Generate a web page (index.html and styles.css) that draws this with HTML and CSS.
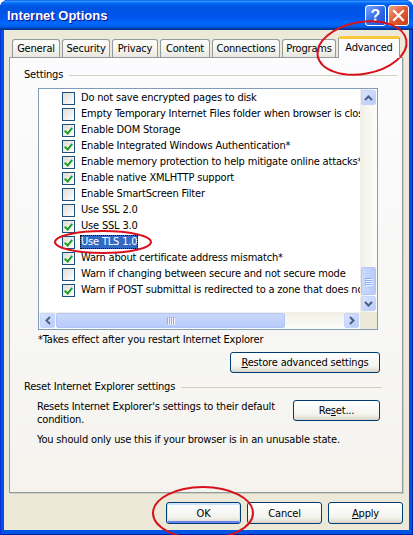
FILE: index.html
```html
<!DOCTYPE html>
<html lang="en">
<head>
  <meta charset="UTF-8" />
  <meta name="viewport" content="width=device-width, initial-scale=1.0" />
  <title>Internet Options</title>
  <link rel="stylesheet" href="styles.css">
</head>
<body>
  <div class="window">
    <div class="titlebar">
      <span class="title">Internet Options</span>
      <div class="title-buttons">
        <span class="tb help">?</span>
        <span class="tb close">
          <svg width="13" height="13" viewBox="0 0 13 13"><path d="M2 2 L11 11 M11 2 L2 11" stroke="#fff" stroke-width="2.2" stroke-linecap="square"/></svg>
        </span>
      </div>
    </div>

    <div class="client">
      <ul class="tabs">
        <li class="t-general">General</li>
        <li class="t-security">Security</li>
        <li class="t-privacy">Privacy</li>
        <li class="t-content">Content</li>
        <li class="t-connections">Connections</li>
        <li class="t-programs">Programs</li>
        <li class="t-advanced active">Advanced</li>
      </ul>

      <div class="panel">
        <div class="group-label"><span>Settings</span><i></i></div>

        <div class="listbox">
          <ul class="rows">
            <li><span class="chk"></span><span class="lbl">Do not save encrypted pages to disk</span></li>
            <li><span class="chk"></span><span class="lbl">Empty Temporary Internet Files folder when browser is closed</span></li>
            <li><span class="chk on"></span><span class="lbl">Enable DOM Storage</span></li>
            <li><span class="chk on"></span><span class="lbl">Enable Integrated Windows Authentication*</span></li>
            <li><span class="chk on"></span><span class="lbl">Enable memory protection to help mitigate online attacks*</span></li>
            <li><span class="chk on"></span><span class="lbl">Enable native XMLHTTP support</span></li>
            <li><span class="chk"></span><span class="lbl">Enable SmartScreen Filter</span></li>
            <li><span class="chk"></span><span class="lbl">Use SSL 2.0</span></li>
            <li><span class="chk on"></span><span class="lbl">Use SSL 3.0</span></li>
            <li class="selected"><span class="chk on"></span><span class="lbl">Use TLS 1.0</span></li>
            <li><span class="chk on"></span><span class="lbl">Warn about certificate address mismatch*</span></li>
            <li><span class="chk"></span><span class="lbl">Warn if changing between secure and not secure mode</span></li>
            <li><span class="chk on"></span><span class="lbl">Warn if POST submittal is redirected to a zone that does not permit posts</span></li>
          </ul>
          <div class="vscroll">
            <span class="sb-btn"><svg width="9" height="6" viewBox="0 0 9 6"><polyline points="1,5 4.5,1.5 8,5" fill="none" stroke="#4d6185" stroke-width="2"/></svg></span>
            <span class="sb-track v"><span class="thumb v"><i></i><i></i><i></i><i></i></span></span>
            <span class="sb-btn"><svg width="9" height="6" viewBox="0 0 9 6"><polyline points="1,1 4.5,4.5 8,1" fill="none" stroke="#4d6185" stroke-width="2"/></svg></span>
          </div>
          <div class="hscroll">
            <span class="sb-btn"><svg width="6" height="9" viewBox="0 0 6 9"><polyline points="5,1 1.5,4.5 5,8" fill="none" stroke="#4d6185" stroke-width="2"/></svg></span>
            <span class="sb-track h"><span class="thumb h"><i></i><i></i><i></i><i></i></span></span>
            <span class="sb-btn"><svg width="6" height="9" viewBox="0 0 6 9"><polyline points="1,1 4.5,4.5 1,8" fill="none" stroke="#4d6185" stroke-width="2"/></svg></span>
          </div>
          <div class="corner"></div>
        </div>

        <p class="note">*Takes effect after you restart Internet Explorer</p>
        <button class="btn restore"><u>R</u>estore advanced settings</button>

        <div class="group-label reset-label"><span>Reset Internet Explorer settings</span><i></i></div>
        <div class="reset-row">
          <p>Resets Internet Explorer's settings to their default<br>condition.</p>
          <button class="btn reset">Re<u>s</u>et...</button>
        </div>
        <p class="warn">You should only use this if your browser is in an unusable state.</p>
      </div>

      <div class="dialog-buttons">
        <button class="btn default">OK</button>
        <button class="btn">Cancel</button>
        <button class="btn"><u>A</u>pply</button>
      </div>
    </div>

    <!-- red marks drawn over the screenshot -->
    <svg class="marks" width="413" height="535" viewBox="0 0 413 535">
      <ellipse cx="362" cy="48" rx="45" ry="26" transform="rotate(-10 362 48)"/>
      <ellipse cx="103" cy="242" rx="48" ry="11"/>
      <ellipse cx="203" cy="513" rx="50" ry="26"/>
    </svg>
  </div>
</body>
</html>
```

FILE: styles.css
```css
body {
  margin: 0;
  background-color: #fff;
}
.window {
  position: relative;
  width: 413px;
  height: 535px;
  box-sizing: border-box;
  padding: 0 4px 5px 4px;
  background-color: #0054e3;
  border-radius: 8px 8px 0 0;
  box-shadow: inset 1px 0 0 #0831d9, inset -1px 0 0 #001ea0, inset 0 -1px 0 #001ea0;
  overflow: hidden;
}
.titlebar {
  height: 30px;
  margin: 0 -4px;
  padding: 0 4px 0 7px;
  display: flex;
  align-items: center;
  justify-content: space-between;
  border-radius: 8px 8px 0 0;
  background: linear-gradient(to bottom, #0058ee 0%, #3a93ff 4%, #288eff 6%, #127dff 8%, #036ffc 10%, #0262ee 14%, #0057e5 20%, #0054e3 24%, #0055eb 56%, #005bf5 66%, #026afe 76%, #0062ef 86%, #0052d6 92%, #0040ab 94%, #003092 100%);
}
.title {
  font-family: "Liberation Sans", Arial, sans-serif;
  font-weight: bold;
  font-size: 13px;
  color: #fff;
  text-shadow: 1px 1px #0f1089;
  margin-top: 1px;
}
.title-buttons {
  display: flex;
  gap: 2px;
  margin-top: 1px;
}
.tb {
  width: 21px;
  height: 21px;
  box-sizing: border-box;
  border: 1px solid #fff;
  border-radius: 3px;
  display: flex;
  align-items: center;
  justify-content: center;
}
.help {
  background: linear-gradient(135deg, #7aa6fb, #2f68e6 55%, #1d4ed2);
  color: #fff;
  font-family: "Liberation Sans", Arial, sans-serif;
  font-weight: bold;
  font-size: 16px;
}
.close {
  background: linear-gradient(135deg, #f0a58c, #e15a32 50%, #c73e15);
}

/* client area */
.client {
  height: 500px;
  background-color: #ece9d8;
  font-family: "DejaVu Sans Condensed", "Liberation Sans", sans-serif;
  font-size: 11px;
  letter-spacing: -0.18px;
  color: #000;
}
.tabs {
  list-style: none;
  margin: 0;
  padding: 6px 0 0 8px;
  display: flex;
  align-items: flex-end;
  height: 21px;
}
.tabs li {
  height: 18px;
  box-sizing: border-box;
  margin-right: 2px;
  line-height: 17px;
  text-align: center;
  border: 1px solid #919b9c;
  border-bottom: none;
  border-radius: 3px 3px 0 0;
  background: linear-gradient(#fefefe, #f4f3ee 60%, #e7e6df);
}
.t-general { width: 48px; }
.t-security { width: 48px; }
.t-privacy { width: 46px; }
.t-content { width: 50px; }
.t-connections { width: 68px; }
.t-programs { width: 54px; }
.tabs li.active {
  position: relative;
  z-index: 1;
  width: 62px;
  height: 22px;
  margin: 0 0 -1px 0;
  line-height: 18px;
  background: #fcfcfe;
  border-top: 3px solid #ffc83c;
  border-radius: 3px 3px 0 0;
}
.panel {
  margin: 0 6px 0 5px;
  height: 436px;
  box-sizing: border-box;
  border: 1px solid #919b9c;
  padding: 10px 4px 0 14px;
  display: flex;
  flex-direction: column;
  background: linear-gradient(#fcfcfe, #f4f3ee);
  box-shadow: 1px 1px 0 #d0cebf;
}
.group-label {
  display: flex;
  align-items: center;
  gap: 6px;
  line-height: 14px;
}
.group-label i {
  flex: 1;
  height: 1px;
  background-color: #d0d0bf;
}
.reset-label {
  margin-top: 7px;
  margin-right: 16px;
}

/* settings list */
.listbox {
  margin: 6px 0 0 14px;
  width: 340px;
  height: 242px;
  box-sizing: border-box;
  border: 1px solid #7f9db9;
  background-color: #fff;
  display: grid;
  grid-template-columns: 1fr 17px;
  grid-template-rows: 1fr 17px;
}
.rows {
  list-style: none;
  margin: 0;
  padding: 1px 0 0;
  overflow: hidden;
}
.rows li {
  height: 16px;
  display: flex;
  align-items: center;
  padding-left: 23px;
  white-space: nowrap;
}
.chk {
  flex: none;
  width: 13px;
  height: 13px;
  box-sizing: border-box;
  border: 1px solid #1c5180;
  margin-right: 5px;
  background: linear-gradient(135deg, #dcdcd7, #fff);
  position: relative;
}
.chk.on::after {
  content: "";
  position: absolute;
  left: 3px;
  top: 1px;
  width: 3px;
  height: 6px;
  border: solid #21a121;
  border-width: 0 2px 2px 0;
  transform: rotate(40deg);
}
.lbl {
  padding: 0 1px;
  line-height: 14px;
}
.selected .lbl {
  background-color: #316ac5;
  color: #fff;
  outline: 1px dotted #000;
  outline-offset: -1px;
}

/* scrollbars */
.vscroll,
.hscroll {
  display: flex;
  background: linear-gradient(to right, #f1efe6, #fdfdfa);
}
.vscroll {
  flex-direction: column;
}
.hscroll {
  background: linear-gradient(#f1efe6, #fdfdfa);
}
.corner {
  background-color: #ece9d8;
}
.sb-btn {
  flex: none;
  width: 15px;
  height: 15px;
  margin: 1px;
  border-radius: 2px;
  border: 1px solid #c3d3fd;
  box-sizing: border-box;
  background: linear-gradient(135deg, #dbe4fd, #b8cbfa);
  display: flex;
  align-items: center;
  justify-content: center;
}
.sb-track {
  flex: 1;
  display: flex;
}
.sb-track.v {
  flex-direction: column;
  justify-content: flex-end;
}
.thumb {
  box-sizing: border-box;
  border: 1px solid #b1c6f7;
  border-radius: 2px;
  background: linear-gradient(to right, #cad8fc, #b7cbfa);
  display: flex;
  align-items: center;
  justify-content: center;
  gap: 1px;
}
.thumb.v {
  height: 28px;
  margin: 0 1px;
  flex-direction: column;
}
.thumb.h {
  width: 229px;
  height: 15px;
  margin: 1px 0;
  background: linear-gradient(#cad8fc, #b7cbfa);
}
.thumb i {
  display: block;
  background-color: #8eaef4;
  box-shadow: 1px 1px 0 #eef3fe;
}
.thumb.v i {
  width: 7px;
  height: 1px;
}
.thumb.h i {
  width: 1px;
  height: 7px;
}

.note {
  margin: 3px 0 0 14px;
  line-height: 14px;
}
.btn {
  font-family: "DejaVu Sans Condensed", "Liberation Sans", sans-serif;
  font-size: 11px;
  letter-spacing: -0.18px;
  color: #000;
  height: 21px;
  padding: 0;
  border: 1px solid #003c74;
  border-radius: 3px;
  background: linear-gradient(#ffffff, #f3f3ef 70%, #e4e1d6 90%, #d6d0c5);
}
.restore {
  width: 150px;
  margin: 5px 0 0 206px;
}
.reset-row {
  margin: 6px 18px 0 13px;
  display: flex;
  align-items: flex-start;
  justify-content: space-between;
}
.reset-row p {
  margin: 0;
  line-height: 13px;
}
.reset {
  width: 87px;
}
.warn {
  margin: 7px 0 0 13px;
  line-height: 14px;
}
.dialog-buttons {
  margin-top: 9px;
  padding-right: 6px;
  display: flex;
  justify-content: flex-end;
  gap: 6px;
}
.dialog-buttons .btn {
  width: 75px;
  height: 22px;
}
.btn.default {
  box-shadow: inset 0 1px 0 1px #cee7ff, inset 0 -1px 0 1px #6982ee;
}
.marks {
  position: absolute;
  left: 0;
  top: 0;
  pointer-events: none;
}
.marks ellipse {
  fill: none;
  stroke: #d8121c;
  stroke-width: 2;
}
```
